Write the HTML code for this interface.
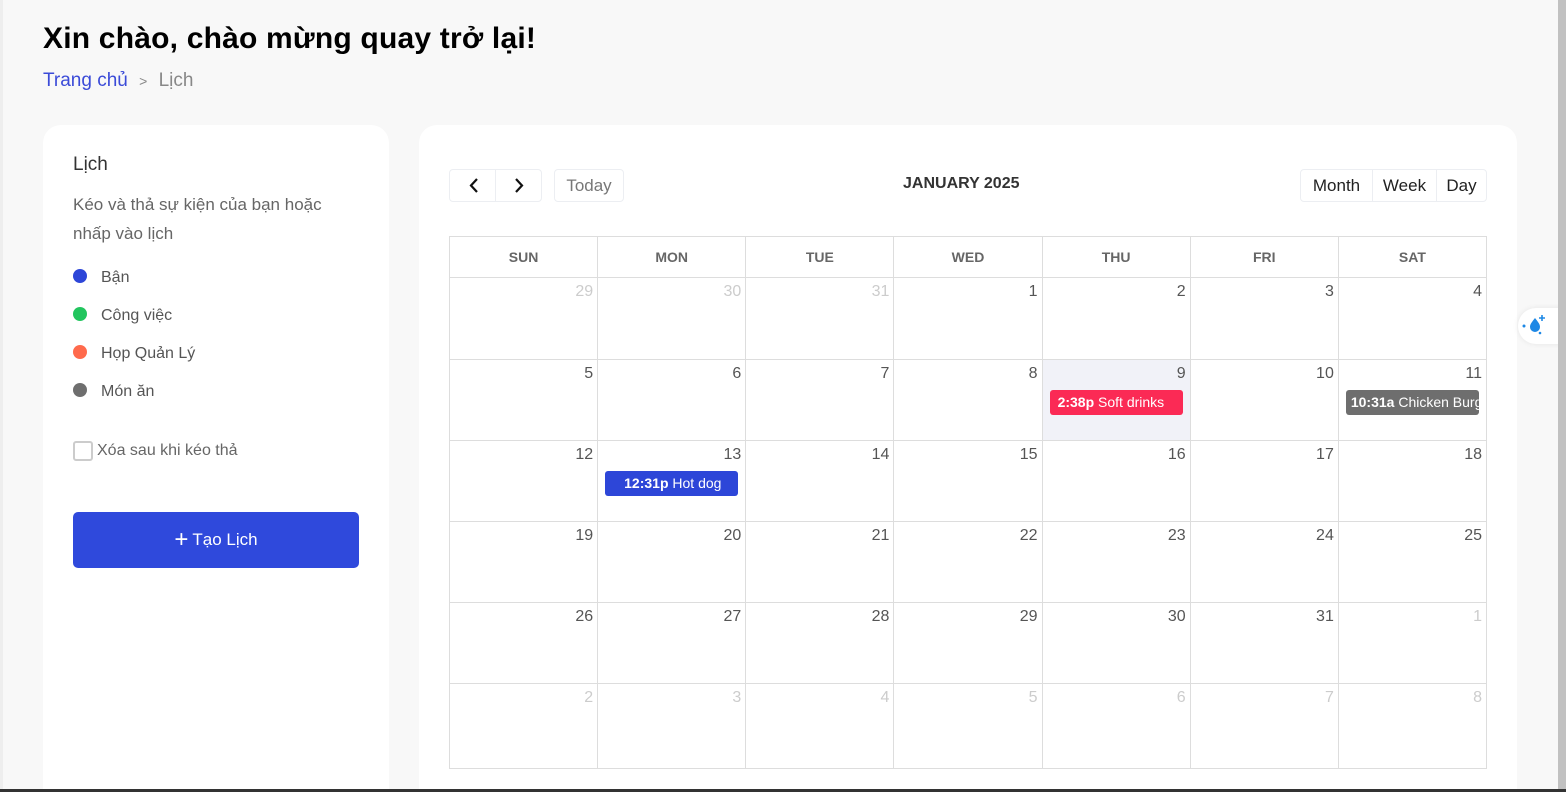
<!DOCTYPE html>
<html style="overflow:hidden;height:792px"><head><meta charset="utf-8"><style>
*{box-sizing:border-box;margin:0;padding:0}
body{width:1566px;height:792px;overflow:hidden;background:#f8f8f8;font-family:"Liberation Sans","Noto Sans CJK SC",sans-serif;position:relative;color:#333}
.abs{position:absolute}
h1{position:absolute;left:43px;top:22px;font-size:30px;font-weight:bold;color:#000;letter-spacing:0.2px}
.bc{left:43px;top:70px;font-size:19px;color:#888}
.bc a{color:#3b4bd8;text-decoration:none}
.card{background:#fff;border-radius:18px 18px 0 0}
.leg{left:73px;font-size:16px;color:#555}
.dot{display:inline-block;width:14px;height:14px;border-radius:50%;vertical-align:-1px;margin-right:14px}
.btn{background:#fff;border:1px solid #eceef2;border-radius:4px;font-size:16px;color:#444;display:flex;align-items:center;justify-content:center}
.grid{left:449px;top:236px;width:1038px;height:533px;background:#ddd;display:grid;grid-template-columns:repeat(7,1fr);grid-template-rows:40px 81px 80px 80px 80px 80px 84px;gap:1px;padding:1px}
.grid div{background:#fff;position:relative}
.hd{font-size:14px;font-weight:bold;color:#666;text-align:center;line-height:40px}
.d{text-align:right;padding:5px 4px 0 0;font-size:16px;color:#555}
.o{color:#ccc}
.ev{position:absolute!important;left:7px;right:7px;top:30px;height:25px;border-radius:3px;color:#fff!important;font-size:14px;text-align:left;line-height:25px;padding-left:8px;white-space:nowrap;overflow:hidden}
</style></head><body>
<div class="abs" style="left:0;top:0;width:3px;height:792px;background:#eee"></div>
<h1>Xin chào, chào mừng quay trở lại!</h1>
<div class="abs bc"><a>Trang chủ</a> <span style="font-size:14px;margin:0 6px">&gt;</span> Lịch</div>

<div class="abs card" style="left:43px;top:125px;width:346px;height:667px"></div>
<div class="abs" style="left:73px;top:154px;font-size:19px;color:#333">Lịch</div>
<div class="abs" style="left:73px;top:190px;font-size:17px;color:#666;line-height:29px;width:262px">Kéo và thả sự kiện của bạn hoặc nhấp vào lịch</div>
<div class="abs leg" style="top:269px"><span class="dot" style="background:#2d46d8"></span>Bận</div>
<div class="abs leg" style="top:307px"><span class="dot" style="background:#22c55e"></span>Công việc</div>
<div class="abs leg" style="top:345px"><span class="dot" style="background:#ff6a4c"></span>Họp Quản Lý</div>
<div class="abs leg" style="top:383px"><span class="dot" style="background:#6e6e6e"></span>Món ăn</div>
<div class="abs" style="left:73px;top:441px;width:20px;height:20px;border:2px solid #ccc;border-radius:3px"></div>
<div class="abs" style="left:97px;top:442px;font-size:16px;color:#666">Xóa sau khi kéo thả</div>
<div class="abs" style="left:73px;top:512px;width:286px;height:56px;background:#2f49dc;border-radius:5px;color:#fff;font-size:17px;display:flex;align-items:center;justify-content:center"><span style="font-size:24px;font-weight:300;margin-right:4px;line-height:1">+</span>Tạo Lịch</div>

<div class="abs card" style="left:419px;top:125px;width:1098px;height:667px"></div>
<div class="abs btn" style="left:449px;top:169px;width:93px;height:33px;padding:0">
<svg width="46" height="31" style="border-right:1px solid #eceef2"><path d="M27 9l-6 6.5 6 6.5" fill="none" stroke="#111" stroke-width="2.2"/></svg>
<svg width="46" height="31"><path d="M20 9l6 6.5-6 6.5" fill="none" stroke="#111" stroke-width="2.2"/></svg></div>
<div class="abs btn" style="left:554px;top:169px;width:70px;height:33px;color:#777;font-size:17px">Today</div>
<div class="abs" style="left:903px;top:175px;font-size:16px;font-weight:bold;color:#333">JANUARY 2025</div>
<div class="abs btn" style="left:1300px;top:169px;width:187px;height:33px;padding:0;font-size:17px;color:#222">
<span style="width:72px;text-align:center;border-right:1px solid #eceef2;line-height:31px">Month</span><span style="width:64px;text-align:center;border-right:1px solid #eceef2;line-height:31px">Week</span><span style="flex:1;text-align:center">Day</span></div>

<div class="abs grid">
<div class="hd">SUN</div><div class="hd">MON</div><div class="hd">TUE</div><div class="hd">WED</div><div class="hd">THU</div><div class="hd">FRI</div><div class="hd">SAT</div>
<div class="d o">29</div><div class="d o">30</div><div class="d o">31</div><div class="d">1</div><div class="d">2</div><div class="d">3</div><div class="d">4</div>
<div class="d">5</div><div class="d">6</div><div class="d">7</div><div class="d">8</div><div class="d" style="background:#f1f2f8">9<div class="ev" style="background:#fb2a55"><b>2:38p</b> Soft drinks</div></div><div class="d">10</div><div class="d">11<div class="ev" style="background:#6e6e6e;padding-left:5px"><b>10:31a</b> Chicken Burger</div></div>
<div class="d">12</div><div class="d">13<div class="ev" style="background:#2d46d8;padding-left:19px"><b>12:31p</b> Hot dog</div></div><div class="d">14</div><div class="d">15</div><div class="d">16</div><div class="d">17</div><div class="d">18</div>
<div class="d">19</div><div class="d">20</div><div class="d">21</div><div class="d">22</div><div class="d">23</div><div class="d">24</div><div class="d">25</div>
<div class="d">26</div><div class="d">27</div><div class="d">28</div><div class="d">29</div><div class="d">30</div><div class="d">31</div><div class="d o">1</div>
<div class="d o">2</div><div class="d o">3</div><div class="d o">4</div><div class="d o">5</div><div class="d o">6</div><div class="d o">7</div><div class="d o">8</div>
</div>

<div class="abs" style="left:1518px;top:308px;width:45px;height:36px;background:#fff;border-radius:18px 0 0 18px;box-shadow:0 0 6px rgba(0,0,0,.08)">
<svg width="40" height="36"><path d="M17 10c-3 4-5 6-5 9a5 5 0 0 0 10 0c0-3-2-5-5-9z" fill="#1e88e5"/><circle cx="6" cy="18" r="1.5" fill="#1e88e5"/><path d="M24 7v6M21 10h6" stroke="#1e88e5" stroke-width="1.6"/><circle cx="22" cy="25" r="1.3" fill="#1e88e5"/></svg></div>
<div class="abs" style="left:1558px;top:0;width:8px;height:792px;background:#c1c1c1"></div>
<div class="abs" style="left:0;top:789px;width:1566px;height:3px;background:#333"></div>
</body></html>
